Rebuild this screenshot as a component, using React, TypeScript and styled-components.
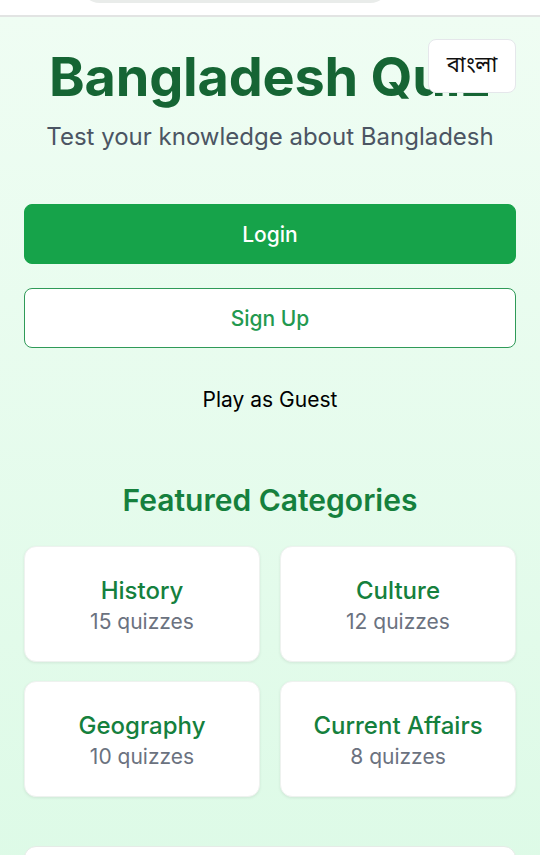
import React from "react";
import styled, { createGlobalStyle } from "styled-components";

const GlobalStyle = createGlobalStyle`
  html, body {
    margin: 0;
    padding: 0;
  }
  body {
    font-family: Inter, "Noto Sans", sans-serif;
    background: #ffffff;
  }
  * {
    box-sizing: border-box;
  }
`;

const TopBar = styled.header`
  height: 17px;
  background: #ffffff;
  border-bottom: 2px solid #e2e4e3;
  overflow: hidden;
  display: flex;
  align-items: flex-end;
  padding-left: 80px;
`;

const AddressPill = styled.div`
  width: 310px;
  height: 40px;
  margin-bottom: 12px;
  border-radius: 20px;
  background: #e9ecea;
`;

const Page = styled.main`
  min-height: 838px;
  background: linear-gradient(180deg, #effdf3 0%, #dcfae6 100%);
  padding: 22px 24px 0;
  overflow: hidden;
`;

const Hero = styled.section`
  position: relative;
  display: flex;
  flex-direction: column;
  align-items: center;
`;

const Title = styled.h1`
  margin: 0;
  font-size: 54px;
  line-height: 76px;
  font-weight: 700;
  color: #166534;
  letter-spacing: -0.2px;
  white-space: nowrap;
`;

const Subtitle = styled.p`
  margin: 0;
  font-size: 24px;
  line-height: 44px;
  color: #4b5563;
  white-space: nowrap;
`;

const LangButton = styled.button`
  position: absolute;
  top: 0;
  right: 0;
  width: 88px;
  height: 54px;
  border: 1px solid #e5e7eb;
  border-radius: 8px;
  background: #ffffff;
  font-family: "Noto Sans Bengali", "Noto Sans", sans-serif;
  font-size: 22px;
  color: #111111;
`;

const Actions = styled.div`
  display: flex;
  flex-direction: column;
  gap: 24px;
  margin-top: 45px;
`;

const ActionButton = styled.button<{ $variant: "solid" | "outline" }>`
  height: 60px;
  width: 100%;
  border-radius: 8px;
  font-family: Inter, "Noto Sans", sans-serif;
  font-size: 21px;
  font-weight: 500;
  border: 1px solid ${(p) => (p.$variant === "solid" ? "#16a34a" : "#2f9a58")};
  background: ${(p) => (p.$variant === "solid" ? "#16a34a" : "#ffffff")};
  color: ${(p) => (p.$variant === "solid" ? "#ffffff" : "#23994f")};
`;

const GuestButton = styled.button`
  align-self: center;
  border: none;
  background: transparent;
  font-family: Inter, "Noto Sans", sans-serif;
  font-size: 21px;
  line-height: 24px;
  color: #000000;
  padding: 16px;
`;

const SectionTitle = styled.h2`
  margin: 52px 0 26px;
  text-align: center;
  font-size: 30px;
  line-height: 40px;
  font-weight: 600;
  color: #15803d;
`;

const CategoryGrid = styled.div`
  display: grid;
  grid-template-columns: 1fr 1fr;
  gap: 19px 20px;
`;

const CategoryCard = styled.div`
  height: 116px;
  padding-top: 4px;
  background: #ffffff;
  border-radius: 12px;
  border: 1px solid #eef2ef;
  box-shadow: 0 1px 3px rgba(0, 0, 0, 0.08);
  display: flex;
  flex-direction: column;
  align-items: center;
  justify-content: center;
`;

const CategoryName = styled.div`
  font-size: 24px;
  line-height: 32px;
  font-weight: 500;
  color: #15803d;
`;

const CategoryCount = styled.div`
  font-size: 21px;
  line-height: 30px;
  color: #6b7280;
`;

const BottomCard = styled.div`
  margin-top: 49px;
  height: 80px;
  background: #ffffff;
  border-radius: 12px;
  border: 1px solid #e6ebe7;
`;

const categories = [
  { name: "History", count: 15 },
  { name: "Culture", count: 12 },
  { name: "Geography", count: 10 },
  { name: "Current Affairs", count: 8 },
];

export default function App() {
  return (
    <>
      <GlobalStyle />
      <TopBar>
        <AddressPill />
      </TopBar>
      <Page>
        <Hero>
          <Title>Bangladesh Quiz</Title>
          <Subtitle>Test your knowledge about Bangladesh</Subtitle>
          <LangButton>বাংলা</LangButton>
        </Hero>
        <Actions>
          <ActionButton $variant="solid">Login</ActionButton>
          <ActionButton $variant="outline">Sign Up</ActionButton>
          <GuestButton>Play as Guest</GuestButton>
        </Actions>
        <SectionTitle>Featured Categories</SectionTitle>
        <CategoryGrid>
          {categories.map((c) => (
            <CategoryCard key={c.name}>
              <CategoryName>{c.name}</CategoryName>
              <CategoryCount>{c.count} quizzes</CategoryCount>
            </CategoryCard>
          ))}
        </CategoryGrid>
        <BottomCard />
      </Page>
    </>
  );
}
